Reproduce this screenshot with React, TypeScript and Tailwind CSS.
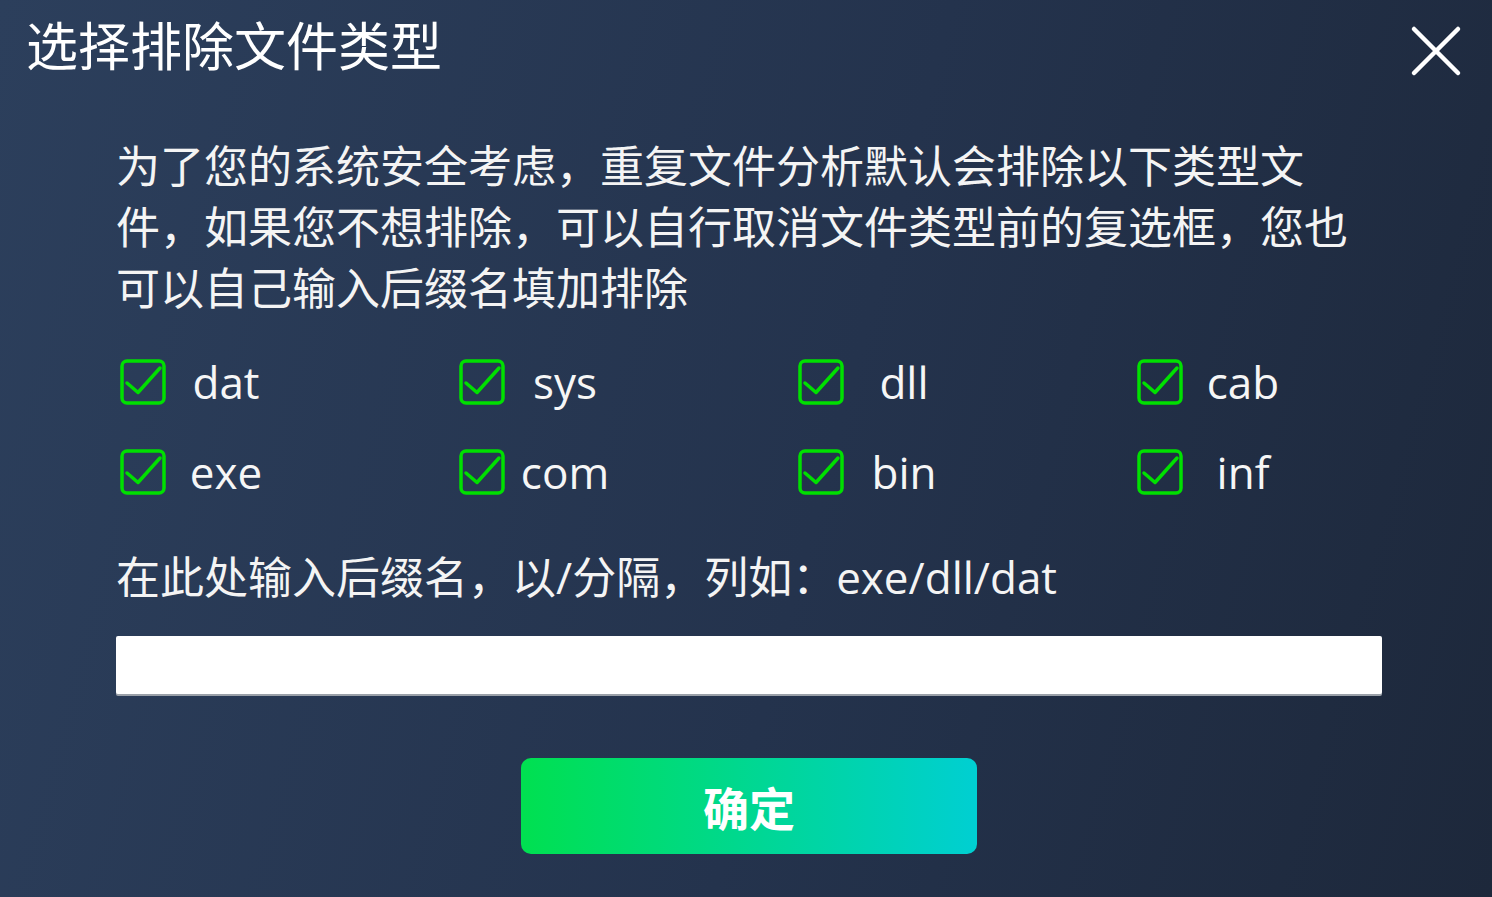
import React from "react";

const font = { fontFamily: '"Noto Sans CJK SC", "Open Sans", sans-serif' };
const latinFirst = { fontFamily: '"Open Sans", "Noto Sans CJK SC", sans-serif' };

function Check() {
  return (
    <svg width="46" height="46" viewBox="0 0 46 46" className="shrink-0">
      <rect x="2" y="2" width="42" height="42" rx="5" fill="none" stroke="#00e000" strokeWidth="3.5" />
      <path d="M7 24 L18 33.5 L40 9" fill="none" stroke="#00e000" strokeWidth="3.5" strokeLinecap="round" strokeLinejoin="round" />
    </svg>
  );
}

const row1 = ["dat", "sys", "dll", "cab"];
const row2 = ["exe", "com", "bin", "inf"];

export default function App() {
  return (
    <div
      className="w-full h-[897px] overflow-hidden text-white bg-[linear-gradient(105deg,#2c3f5c_0%,#24334d_55%,#1d283b_100%)]"
      style={font}
    >
      <div className="flex items-start justify-between pl-[26px] pr-[30px] pt-[14px]">
        <h1 className="text-[52px] leading-[60px] font-normal">选择排除文件类型</h1>
        <svg width="52" height="52" viewBox="0 0 52 52" className="mt-[11px]">
          <path d="M4 4 L48 48 M48 4 L4 48" stroke="white" strokeWidth="4.5" strokeLinecap="round" />
        </svg>
      </div>

      <div className="ml-[116px] w-[1266px]">
        <p className="mt-[57px] text-[44px] leading-[61px] text-[#f4f4f4]">
          为了您的系统安全考虑，重复文件分析默认会排除以下类型文件，如果您不想排除，可以自行取消文件类型前的复选框，您也可以自己输入后缀名填加排除
        </p>

        <div className="mt-[20px] ml-[4px]" style={latinFirst}>
          {[row1, row2].map((row, i) => (
            <div key={i} className="flex h-[90px] items-center">
              {row.map((t) => (
                <div key={t} className="flex w-[339px] shrink-0 items-center">
                  <Check />
                  <span className="w-[120px] text-center text-[44px] leading-[50px] text-[#f6f6f6]">{t}</span>
                </div>
              ))}
            </div>
          ))}
        </div>

        <p className="mt-[30px] text-[44px] leading-[61px] text-[#f4f4f4]" style={latinFirst}>
          在此处输入后缀名，以/分隔，列如：exe/dll/dat
        </p>

        <input
          type="text"
          className="mt-[28px] block h-[58px] w-[1266px] rounded-[2px] bg-white outline-none shadow-[0_2px_0_#9aa0a8] text-[28px] px-3 text-black"
        />
      </div>

      <div className="mt-[64px] flex justify-center pl-[6px]">
        <button className="h-[96px] w-[456px] rounded-[10px] bg-[linear-gradient(90deg,#00e050_0%,#00cfd2_100%)] text-[46px] font-bold text-white">
          确定
        </button>
      </div>
    </div>
  );
}
